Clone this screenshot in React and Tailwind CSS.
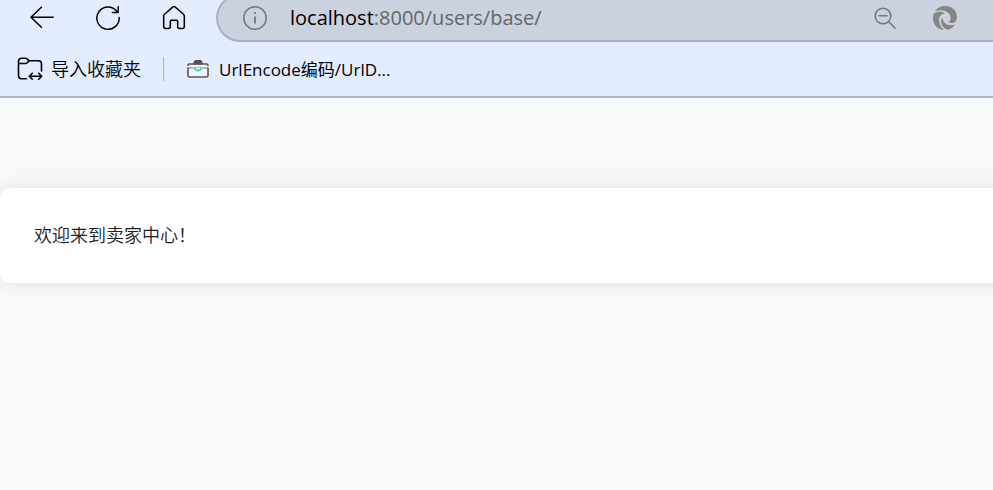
const host = 'localhost';
const path = ':8000/users/base/';

function BackIcon() {
  return (
    <svg className="size-6" viewBox="0 0 24 24" fill="none" stroke="currentColor" strokeWidth="1.5" strokeLinecap="round" strokeLinejoin="round">
      <path d="M23.2 11.2H1M11.4 1.2L1 11.2l10.4 10" />
    </svg>
  );
}

function ReloadIcon() {
  return (
    <svg className="size-6" viewBox="0 0 24 24" fill="none" stroke="currentColor" strokeWidth="1.5" strokeLinecap="round" strokeLinejoin="round">
      <path d="M23.2 11.5A11.2 11.2 0 1 1 21.6 6.3M22.2 .8v5.8h-5.8" />
    </svg>
  );
}

function HomeIcon() {
  return (
    <svg className="size-6" viewBox="0 0 24 24" fill="none" stroke="currentColor" strokeWidth="1.5" strokeLinejoin="round">
      <path d="M10.7 1.1a2 2 0 0 1 2.6 0l8.2 7.2c.5.4.8 1 .8 1.7v10.6a2 2 0 0 1-2 2h-2.6a2 2 0 0 1-2-2v-5.4a1 1 0 0 0-1-1H9.3a1 1 0 0 0-1 1v5.4a2 2 0 0 1-2 2H3.7a2 2 0 0 1-2-2V10c0-.7.3-1.3.8-1.7z" />
    </svg>
  );
}

function InfoIcon() {
  return (
    <svg className="size-6" viewBox="0 0 24 24" fill="none" stroke="currentColor" strokeWidth="1.5">
      <circle cx="12" cy="12" r="11.2" />
      <path d="M12 10.5v7M12 6v2" strokeWidth="1.8" />
    </svg>
  );
}

function ZoomOutIcon() {
  return (
    <svg className="size-6" viewBox="0 0 24 24" fill="none" stroke="currentColor" strokeWidth="1.6" strokeLinecap="round">
      <circle cx="10" cy="10" r="7.8" />
      <path d="M6 9.7h8M15.7 15.7l6.3 6.3" />
    </svg>
  );
}

function SwirlIcon() {
  return (
    <svg className="size-6" viewBox="0 0 24 24" fill="currentColor">
      <path d="M2.2 5C4.5 1.8 8 0 12.3 0 19 0 24 4.8 24 11.2c0 3.5-2 5.8-5.3 5.8-1.4 0-2.5-.3-3.4-.9 1.5-.9 2.3-2.3 2.3-4.2C17.6 7.6 13 4.3 7.8 4.3c-2 0-3.9.2-5.6.7z" />
      <path d="M.6 7.8C2.5 6 5.2 5.4 8 5.8c1.5.2 2.7.7 3.7 1.6C8.2 7.9 6 10.3 6 14c0 3.8 1.8 7 5 9.9C4.5 23.3 0 18.6 0 12.2c0-1.6.1-3 .6-4.400z" />
      <path d="M9.5 11.5c.3 4.7 3.6 7.7 8.5 7.7 1.6 0 3-.3 4.3-.9-1.9 3-4.6 5-7.8 5.4-4-1.8-6.3-4.9-6.3-8.3 0-1.5.4-2.9 1.3-3.9z" />
    </svg>
  );
}

function ImportIcon() {
  return (
    <svg className="h-6 w-[26px]" viewBox="0 0 26 24" fill="none" stroke="currentColor" strokeWidth="1.6" strokeLinecap="round" strokeLinejoin="round">
      <path d="M9.5 21.7H4.5a3 3 0 0 1-3-3V4.3a3 3 0 0 1 3-3H8.5c1 0 1.5.4 2.1 1.1L12 3.7h9.5a3 3 0 0 1 3 3V14M1.5 6.5h6.8c1 0 1.6-.4 2.2-1L12 3.7" />
      <path d="M12.3 19.2H24.7M15.3 16.2l-3 3 3 3M21.7 16.2l3 3-3 3" />
    </svg>
  );
}

function ToolboxIcon() {
  return (
    <svg className="h-5 w-[22px]" viewBox="0 0 22 20" fill="none">
      <rect x="1" y="5" width="20" height="13" rx="1.5" fill="#f1f3f8" stroke="#55575f" strokeWidth="1.6" />
      <path d="M0 7.7h22" stroke="#f1f3f8" strokeWidth="1.4" />
      <path d="M1 9h5.5M15.5 9H21" stroke="#777a82" />
      <path d="M6.5 5.5V3L8 1h6l1.5 2v2.5z" fill="#5a5151" />
      <path d="M7 8h8v2c-1 1.7-2.3 2.5-4 2.5S8 11.7 7 10z" fill="#45dbb3" />
      <path d="M9 9.5h4" stroke="#e4fff7" strokeWidth="1.4" />
    </svg>
  );
}

export default function App() {
  return (
    <div className="min-h-screen overflow-hidden bg-[#f8f9fb] font-['Open_Sans','Noto_Sans_CJK_SC',sans-serif] text-black">
      <header className="border-b-2 border-[#b0b6c8] bg-[#e4edff]">
        <div className="flex h-[42px] items-end">
          <nav className="flex h-12 shrink-0 items-center gap-[42px] px-[30px]">
            <button type="button" aria-label="Back"><BackIcon /></button>
            <button type="button" aria-label="Reload"><ReloadIcon /></button>
            <button type="button" aria-label="Home"><HomeIcon /></button>
          </nav>
          <div className="flex h-12 min-w-0 flex-1 items-center rounded-l-full border-2 border-r-0 border-[#a9b0c1] bg-[#cad1df] pr-9 pl-[25px] text-[#777]">
            <button type="button" aria-label="Site information"><InfoIcon /></button>
            <a href="#" className="ml-[23px] flex-1 truncate text-[20px] leading-[30px] text-[#666]">
              <span className="text-black">{host}</span>{path}
            </a>
            <div className="flex items-center gap-9">
              <button type="button" aria-label="Zoom out"><ZoomOutIcon /></button>
              <button type="button" aria-label="Extensions" className="text-[#858585]"><SwirlIcon /></button>
            </div>
          </div>
        </div>

        <div className="flex h-[54px] items-center pl-[17px] text-[18px] leading-[27px]">
          <button type="button" className="flex items-center gap-2 font-[350]">
            <ImportIcon />
            导入收藏夹
          </button>
          <span className="ml-[22px] h-6 w-px bg-[#adb4c4]" />
          <a href="#" className="ml-[23px] flex items-center gap-[10px] text-[17px]">
            <ToolboxIcon />
            UrlEncode编码/UrlD...
          </a>
        </div>
      </header>

      <main className="pt-[90px]">
        <section className="-mr-4 rounded-[10px] bg-white p-[34px] shadow-[0_0_20px_rgba(0,0,0,0.1)]">
          <p className="text-[18px] leading-[27px] font-[350] text-[#222]">欢迎来到卖家中心！</p>
        </section>
      </main>
    </div>
  );
}
